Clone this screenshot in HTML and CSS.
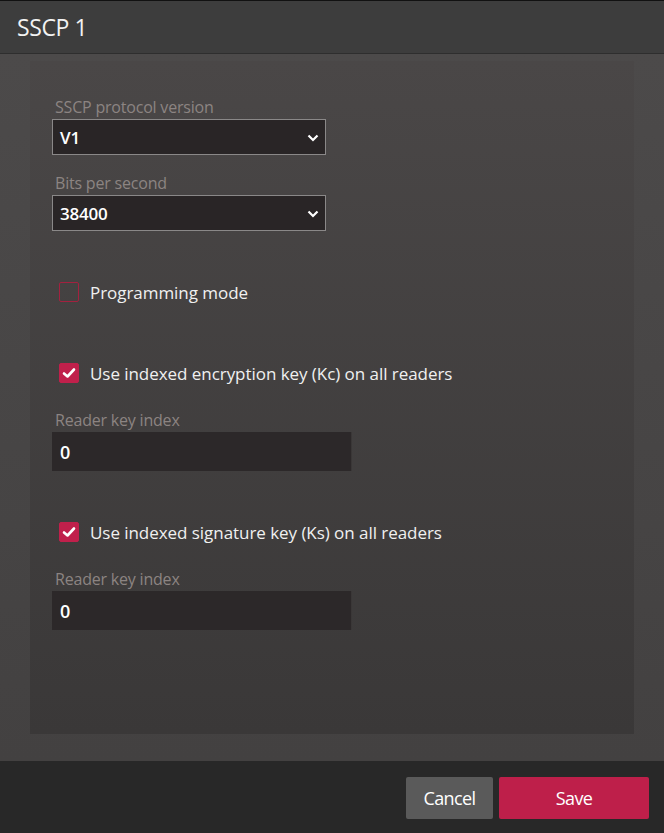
FILE: index.html
```html
<!DOCTYPE html>
<html>
<head>
<meta charset="utf-8">
<link rel="stylesheet" href="styles.css">
</head>
<body>
<div class="dialog">
  <header class="header"><h1 class="title">SSCP 1</h1></header>
  <main class="body">
    <section class="panel">
      <div class="field">
        <label class="label">SSCP protocol version</label>
        <div class="select"><span class="value">V1</span>
          <svg class="chev" width="12" height="8" viewBox="0 0 12 8"><path d="M1.5 1.5 L6 6 L10.5 1.5" fill="none" stroke="#fff" stroke-width="2.2"/></svg>
        </div>
      </div>
      <div class="field">
        <label class="label">Bits per second</label>
        <div class="select"><span class="value">38400</span>
          <svg class="chev" width="12" height="8" viewBox="0 0 12 8"><path d="M1.5 1.5 L6 6 L10.5 1.5" fill="none" stroke="#fff" stroke-width="2.2"/></svg>
        </div>
      </div>
      <div class="check check-first">
        <span class="box"></span>
        <span class="check-text">Programming mode</span>
      </div>
      <div class="check check-gap">
        <span class="box box-on"><svg width="14" height="12" viewBox="0 0 14 12"><path d="M2 6.5 L5.5 9.5 L12 2.5" fill="none" stroke="#fff" stroke-width="2.6" stroke-linecap="round" stroke-linejoin="round"/></svg></span>
        <span class="check-text">Use indexed encryption key (Kc) on all readers</span>
      </div>
      <div class="field field-input">
        <label class="label">Reader key index</label>
        <div class="input">0</div>
      </div>
      <div class="check check-gap2">
        <span class="box box-on"><svg width="14" height="12" viewBox="0 0 14 12"><path d="M2 6.5 L5.5 9.5 L12 2.5" fill="none" stroke="#fff" stroke-width="2.6" stroke-linecap="round" stroke-linejoin="round"/></svg></span>
        <span class="check-text">Use indexed signature key (Ks) on all readers</span>
      </div>
      <div class="field field-input">
        <label class="label">Reader key index</label>
        <div class="input">0</div>
      </div>
    </section>
  </main>
  <footer class="footer">
    <button class="btn btn-cancel">Cancel</button>
    <button class="btn btn-save">Save</button>
  </footer>
</div>
</body>
</html>
```
FILE: styles.css
```css
html, body {
  margin: 0;
  padding: 0;
  background: #282828;
}
body {
  font-family: "Open Sans", "Noto Sans", sans-serif;
  color: #fff;
}
.dialog {
  width: 664px;
  height: 833px;
  display: flex;
  flex-direction: column;
}
.header {
  border-top: 1px solid #111;
  border-bottom: 1px solid #2e2e2e;
  background: #3d3d3d;
  display: flex;
  align-items: center;
  padding-left: 17px;
  box-sizing: border-box;
  height: 54px;
}
.title {
  margin: 0;
  font-size: 23px;
  font-weight: 400;
  letter-spacing: -0.4px;
  color: #f2f2f2;
}
.body {
  flex: 1;
  background: linear-gradient(#4c4a4a, #434141);
  padding: 7px 30px 27px 30px;
  display: flex;
}
.panel {
  flex: 1;
  background: linear-gradient(#4a4747, #3a3838);
  padding: 34px 22px 0 22px;
  display: flex;
  flex-direction: column;
  align-items: flex-start;
}
.field {
  display: flex;
  flex-direction: column;
  margin-bottom: 16px;
}
.label {
  font-size: 16px;
  color: #8c8482;
  letter-spacing: -0.2px;
  padding-left: 3px;
  line-height: 24px;
}
.select {
  width: 274px;
  height: 36px;
  box-sizing: border-box;
  border: 1px solid #8a8888;
  background: #292526;
  display: flex;
  align-items: center;
  justify-content: space-between;
  padding: 0 6px 0 7px;
}
.value {
  font-size: 17px;
  font-weight: 600;
  letter-spacing: -0.2px;
  color: #fff;
}
.chev { margin-top: 1px; }
.check {
  display: flex;
  align-items: center;
  padding-left: 7px;
  height: 24px;
}
.check-first { margin-top: 33px; }
.check-gap { margin-top: 57px; }
.check-gap2 { margin-top: 49px; }
.box {
  width: 20px;
  height: 20px;
  box-sizing: border-box;
  border: 1px solid #a3213f;
  border-radius: 2px;
  margin-right: 11px;
  display: flex;
  align-items: center;
  justify-content: center;
}
.box-on {
  background: #c0204b;
  border-color: #c0204b;
}
.check-text {
  font-size: 17px;
  color: #f0f0f0;
  letter-spacing: -0.05px;
}
.field-input {
  margin-top: 23px;
  margin-bottom: 0;
}
.input {
  width: 300px;
  height: 39px;
  box-sizing: border-box;
  background: #2c2829;
  border-right: 1px solid #3a3737;
  padding-left: 8px;
  display: flex;
  align-items: center;
  font-size: 18px;
  font-weight: 600;
  color: #fff;
}
.footer {
  height: 72px;
  background: #282828;
  display: flex;
  justify-content: flex-end;
  align-items: flex-start;
  padding: 16px 15px 0 0;
  box-sizing: border-box;
  gap: 6px;
}
.btn {
  height: 42px;
  border: none;
  border-radius: 2px;
  font-family: "Open Sans", "Noto Sans", sans-serif;
  font-size: 18px;
  letter-spacing: -0.6px;
  color: #fff;
}
.btn-cancel {
  width: 87px;
  background: #5a5a5a;
}
.btn-save {
  width: 150px;
  background: #be1f4a;
}
```
